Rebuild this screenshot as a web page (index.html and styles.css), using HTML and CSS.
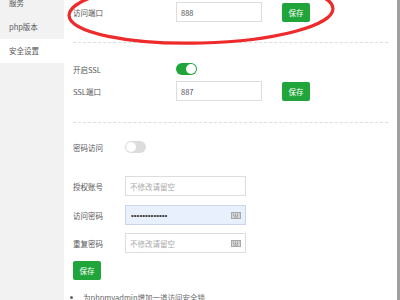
FILE: index.html
```html
<!DOCTYPE html>
<html lang="zh-CN">
<head>
<meta charset="utf-8">
<link rel="stylesheet" href="styles.css">
</head>
<body>
<div class="page">
  <nav class="sidebar">
    <div class="nav-item">服务</div>
    <div class="nav-item">php版本</div>
    <div class="nav-item active">安全设置</div>
  </nav>
  <main class="main">
    <div class="row row-port">
      <span class="label wide">访问端口</span>
      <input class="field short" type="text" value="888">
      <button class="btn">保存</button>
    </div>
    <div class="divider div1"></div>
    <div class="row row-ssl-toggle">
      <span class="label wide">开启SSL</span>
      <span class="toggle on"><span class="knob"></span></span>
    </div>
    <div class="row row-ssl-port">
      <span class="label wide">SSL端口</span>
      <input class="field short" type="text" value="887">
      <button class="btn">保存</button>
    </div>
    <div class="divider div2"></div>
    <div class="row row-pw-toggle">
      <span class="label narrow">密码访问</span>
      <span class="toggle off"><span class="knob"></span></span>
    </div>
    <div class="row row-user">
      <span class="label narrow">授权账号</span>
      <input class="field long" type="text" placeholder="不修改请留空">
    </div>
    <div class="row row-pass">
      <span class="label narrow">访问密码</span>
      <div class="field long filled">
        <span class="dots">•••••••••••••</span>
        <svg class="kbd" width="10" height="7" viewBox="0 0 10 7"><rect x="0.5" y="0.5" width="9" height="6" fill="#d6d6d6" stroke="#a8a8a8"/><path d="M2 2h1M4 2h1M6 2h1M8 2h0.5M2 3.5h1M4 3.5h1M6 3.5h1M3 5h4" stroke="#8a8a8a" stroke-width="0.8"/></svg>
      </div>
    </div>
    <div class="row row-repeat">
      <span class="label narrow">重复密码</span>
      <div class="field long">
        <span class="ph">不修改请留空</span>
        <svg class="kbd" width="10" height="7" viewBox="0 0 10 7"><rect x="0.5" y="0.5" width="9" height="6" fill="#d6d6d6" stroke="#a8a8a8"/><path d="M2 2h1M4 2h1M6 2h1M8 2h0.5M2 3.5h1M4 3.5h1M6 3.5h1M3 5h4" stroke="#8a8a8a" stroke-width="0.8"/></svg>
      </div>
    </div>
    <button class="btn save-all">保存</button>
    <ul class="tips">
      <li>为phpmyadmin增加一道访问安全锁</li>
    </ul>
  </main>
  <div class="scrollbar"></div>
  <svg class="mark" width="400" height="300" viewBox="0 0 400 300">
    <ellipse cx="201" cy="12" rx="132" ry="31" transform="rotate(-1.5 201 12)" fill="none" stroke="#ee2a2a" stroke-width="3.2"/>
  </svg>
</div>
</body>
</html>
```
FILE: styles.css
```css
* { box-sizing: border-box; }
html, body { margin: 0; padding: 0; background: #fff; }
body {
  font-family: "Noto Sans CJK SC", "Noto Sans", "Liberation Sans", sans-serif;
  font-size: 7.5px;
  color: #555;
}
.page {
  position: relative;
  width: 400px;
  height: 300px;
  overflow: hidden;
  display: flex;
}
.sidebar {
  width: 64px;
  flex: 0 0 64px;
  background: #f2f2f2;
  margin-top: -9px;
  height: 309px;
}
.nav-item {
  height: 24px;
  line-height: 24px;
  padding-left: 9px;
  color: #555;
}
.nav-item.active { background: #fff; }
.main {
  flex: 1;
  padding: 2px 9px 0 9px;
  display: flex;
  flex-direction: column;
}
.row {
  display: flex;
  align-items: center;
}
.label { flex: 0 0 auto; color: #555; }
.label.wide { width: 103px; }
.label.narrow { width: 52px; }
.field {
  height: 20px;
  border: 1px solid #ddd;
  background: #fff;
  padding: 0 4px;
  font: inherit;
  font-size: 7.5px;
  color: #555;
  outline: none;
  border-radius: 0;
  display: flex;
  align-items: center;
}
.field.short { width: 86px; }
.field.long { width: 121px; }
.field::placeholder { color: #aaa; }
.field.filled { background: #e8f0fe; border-color: #c9d5ea; }
.ph { color: #aaa; flex: 1; }
.dots {
  flex: 1;
  color: #333;
  font-family: "Liberation Sans", sans-serif;
  font-size: 8px;
  letter-spacing: 0;
  padding-left: 1px;
}
.kbd { flex: 0 0 auto; }
.btn {
  height: 19px;
  width: 28px;
  border: 0;
  border-radius: 2px;
  background: #20a53a;
  color: #fff;
  font: inherit;
  font-size: 7.5px;
  padding: 0;
  margin-left: 20px;
}
.divider {
  border-top: 1px dashed #ddd;
  height: 0;
}
.div1 { margin-top: 20px; }
.row-ssl-toggle { margin-top: 20px; height: 12px; }
.row-ssl-port { margin-top: 6px; }
.div2 { margin-top: 21px; }
.row-pw-toggle { margin-top: 18px; height: 12px; }
.row-user { margin-top: 23px; }
.row-pass { margin-top: 9px; }
.row-repeat { margin-top: 8px; }
.save-all { margin: 8px 0 0 0; align-self: flex-start; flex: 0 0 19px; }
.toggle {
  width: 21px;
  height: 12px;
  border-radius: 6px;
  display: flex;
  align-items: center;
  padding: 0 1px;
}
.toggle.on { background: #20a53a; justify-content: flex-end; }
.toggle.off { background: #dcdcdc; justify-content: flex-start; }
.knob {
  width: 10px;
  height: 10px;
  border-radius: 50%;
  background: #fff;
}
.tips {
  margin: 11px 0 0 0;
  padding: 0 0 0 10px;
  color: #666;
  flex: 0 0 auto;
}
.tips li { line-height: 14px; }
.scrollbar {
  width: 3px;
  flex: 0 0 3px;
  background: #a0a0a0;
}
.mark {
  position: absolute;
  left: 0;
  top: 0;
  pointer-events: none;
}
```
